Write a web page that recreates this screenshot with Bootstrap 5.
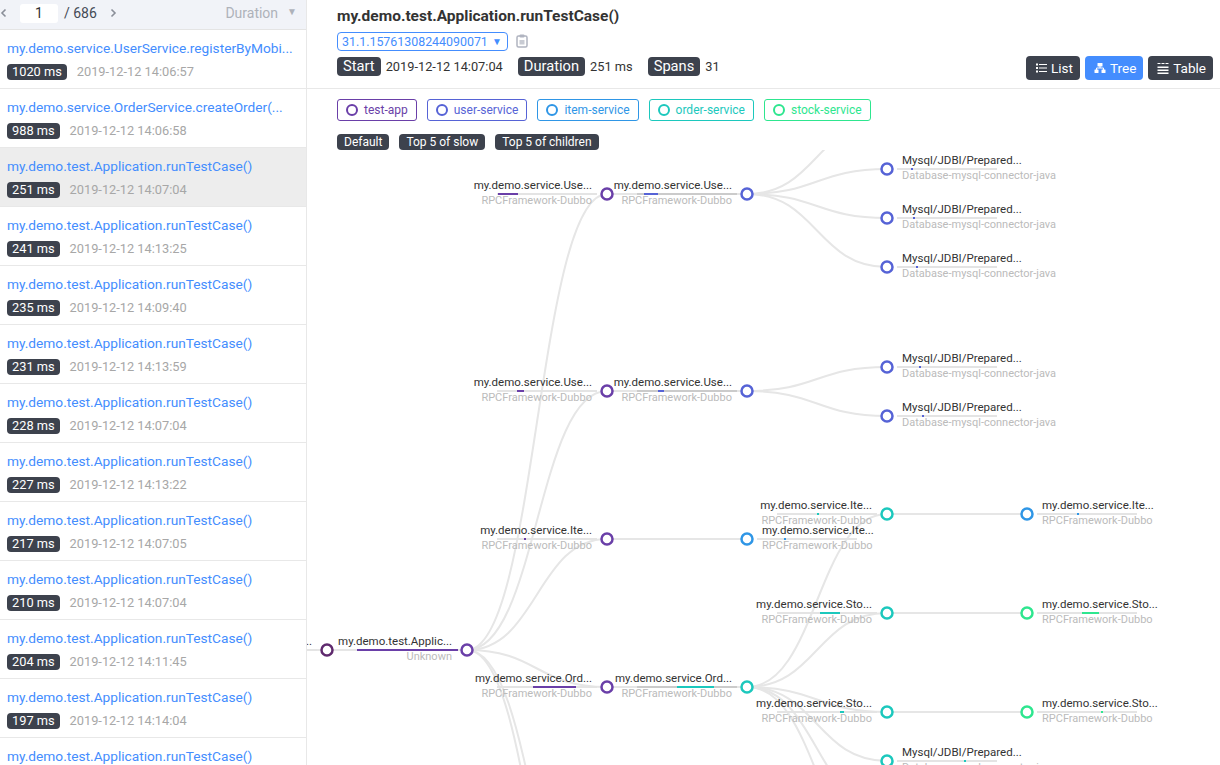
<!DOCTYPE html>
<html lang="en">
<head>
    <meta charset="UTF-8">
    <meta name="viewport" content="width=device-width, initial-scale=1.0">
    <title>Trace</title>
    <link href="https://cdn.jsdelivr.net/npm/bootstrap@5.3.0/dist/css/bootstrap.min.css" rel="stylesheet">
    <style>
        body {
            font-family: Roboto, "Noto Sans", sans-serif;
            font-size: 13px;
            color: #333;
            overflow: hidden;
            height: 100vh;
        }
        .side-panel { width: 307px; border-right: 1px solid #e8e8e8; overflow: hidden; }
        .side-top { height: 30px; background: #f1f3f8; border-bottom: 1px solid #e4e4e4; padding: 0 9px 3px 0; color: #444a55; font-size: 14px; }
        .pager-arrow { width: 8px; height: 10px; display: block; }
        .pager-input { width: 38px; height: 19px; background: #fff; border-radius: 3px; text-align: center; line-height: 19px; color: #333; margin: 0 6px 0 12px; }
        .pager-next { margin-left: 12px; }
        .sort-label { color: #aeb2ba; }
        .sort-caret { color: #aeb2ba; font-size: 10px; margin-left: 9px; margin-bottom: 3px; }
        .trace-item { height: 59px; padding: 8px 7px 0; border-bottom: 1px solid #e8e8e8; white-space: nowrap; overflow: hidden; }
        .trace-item.is-active { background: #ededed; }
        .trace-name { color: #448dfe; font-size: 13.7px; line-height: 20px; }
        .trace-meta { margin-top: 4px; display: flex; align-items: center; gap: 10px; color: #a7a7a7; font-size: 12.8px; }
        .dark-tag { background: #3d424d; color: #fff; border-radius: 4px; display: inline-block; }
        .trace-meta .dark-tag { font-size: 12.8px; line-height: 16px; padding: 0 5px; }
        .main-top { height: 89px; border-bottom: 1px solid #e8e8e8; padding: 6px 7px 0 30px; }
        .trace-title { font-size: 15.5px; font-weight: 700; line-height: 20px; margin: 0; color: #333; }
        .trace-select { border: 1px solid #448dfe; border-radius: 4px; color: #448dfe; height: 19px; width: 171px; font-size: 12.4px; line-height: 17px; padding-left: 4px; margin-top: 6px; }
        .select-caret { font-size: 10px; margin-left: auto; margin-right: 5px; }
        .info-line { margin-top: 6px; font-size: 12.8px; }
        .info-line .dark-tag { font-size: 14.7px; line-height: 19px; padding: 0 6px; margin-right: 5px; }
        .info-val { margin-right: 15px; }
        .view-btn { background: #3d424d; color: #fff; font-size: 13.5px; line-height: 24px; height: 24px; padding: 0 7px 0 9px; border-radius: 4px; border: 0; gap: 4px; }
        .view-btn.is-on { background: #448dfe; }
        .view-group { margin-top: 50px; gap: 5px; }
        .legend-zone { padding: 10px 0 0 30px; height: 61px; }
        .svc-chip { height: 22px; border: 1px solid; border-radius: 3px; font-size: 12px; padding: 0 8px; gap: 6px; }
        .svc-ring { width: 12px; height: 12px; border: 2px solid; border-radius: 50%; }
        .filter-row { margin-top: 13px; }
        .filter-row .dark-tag { font-size: 12px; line-height: 16px; padding: 0 7px; }
        .graph-box { min-height: 0; overflow: hidden; }
        .graph-box svg { display: block; width: 100%; height: 100%; }
        .g-link { fill: none; stroke: #e6e6e6; stroke-width: 2; }
        .g-name { font-size: 11.5px; fill: #333; }
        .g-sub { font-size: 11px; fill: #bbb; }
        .g-node { fill: #fff; stroke-width: 2.5; }
    </style>
</head>
<body class="d-flex">
    <div class="side-panel flex-shrink-0">
        <div class="side-top d-flex align-items-center">
            <svg class="pager-arrow" viewBox="0 0 8 10"><path d="M5.500 1.500 2 5l3.500 3.500" fill="none" stroke="#8a8f99" stroke-width="1.600"/></svg>
            <span class="pager-input">1</span>
            <span>/ 686</span>
            <svg class="pager-arrow pager-next" viewBox="0 0 8 10"><path d="M2.500 1.500 6 5 2.500 8.500" fill="none" stroke="#8a8f99" stroke-width="1.600"/></svg>
            <span class="sort-label ms-auto">Duration</span>
            <span class="sort-caret">▼</span>
        </div>
        <div id="traceList"></div>
    </div>

    <div class="flex-grow-1 d-flex flex-column" style="min-width:0">
        <div class="main-top d-flex">
            <div class="flex-grow-1">
                <h1 class="trace-title">my.demo.test.Application.runTestCase()</h1>
                <div class="d-flex align-items-center">
                    <div class="trace-select d-flex align-items-center">31.1.15761308244090071<span class="select-caret">▼</span></div>
                    <svg class="ms-2 mt-1" width="12" height="14" viewBox="0 0 12 14"><rect x="1" y="2" width="10" height="11" rx="1.500" fill="none" stroke="#b0b4c0" stroke-width="1.500"/><rect x="3.500" y="0.500" width="5" height="3" rx="1" fill="#b0b4c0"/><rect x="3.500" y="6" width="5" height="4.500" fill="#c8cbd3"/></svg>
                </div>
                <div class="info-line d-flex align-items-center">
                    <span class="dark-tag">Start</span><span class="info-val">2019-12-12 14:07:04</span>
                    <span class="dark-tag">Duration</span><span class="info-val">251 ms</span>
                    <span class="dark-tag">Spans</span><span>31</span>
                </div>
            </div>
            <div class="view-group d-flex align-self-start">
                <button class="view-btn d-flex align-items-center" type="button">
                    <svg width="12" height="12" viewBox="0 0 12 12" fill="#fff"><rect x="1" y="1.500" width="2" height="2"/><rect x="4" y="2" width="8" height="1"/><rect x="1" y="5" width="2" height="2"/><rect x="4" y="5.500" width="8" height="1"/><rect x="1" y="8.500" width="2" height="2"/><rect x="4" y="9" width="8" height="1"/></svg>List
                </button>
                <button class="view-btn is-on d-flex align-items-center" type="button">
                    <svg width="12" height="12" viewBox="0 0 12 12" fill="#fff"><rect x="3.500" y="1" width="5" height="3.500" rx=".5"/><path d="M2.500 8V6h7v2M6 4v2" fill="none" stroke="#fff"/><rect x="0.500" y="7.500" width="4" height="3.500" rx=".5"/><rect x="7.500" y="7.500" width="4" height="3.500" rx=".5"/></svg>Tree
                </button>
                <button class="view-btn d-flex align-items-center" type="button">
                    <svg width="12" height="12" viewBox="0 0 12 12" fill="#fff"><rect x="0.500" y="1" width="3" height="1"/><rect x="4.500" y="1" width="3" height="1"/><rect x="8.500" y="1" width="3" height="1"/><rect x="0.500" y="4.500" width="11" height="1.500"/><rect x="0.500" y="7.500" width="11" height="1.500"/><rect x="0.500" y="10.500" width="11" height="1.500"/></svg>Table
                </button>
            </div>
        </div>

        <div class="legend-zone">
            <div class="d-flex" style="gap:10px" id="legendRow"></div>
            <div class="filter-row d-flex" style="gap:10px">
                <span class="dark-tag">Default</span>
                <span class="dark-tag">Top 5 of slow</span>
                <span class="dark-tag">Top 5 of children</span>
            </div>
        </div>

        <div class="graph-box flex-grow-1">
            <svg id="graph"></svg>
        </div>
    </div>

    <script src="https://cdn.jsdelivr.net/npm/bootstrap@5.3.0/dist/js/bootstrap.bundle.min.js"></script>
    <script>
        const C = { app: "#6a3fa8", user: "#5663d6", item: "#2f96e6", order: "#1cc8bd", stock: "#2ee68f" };

        const legend = [["test-app", C.app], ["user-service", C.user], ["item-service", C.item], ["order-service", C.order], ["stock-service", C.stock]];
        document.getElementById("legendRow").innerHTML = legend.map(([n, c]) =>
            `<div class="svc-chip d-flex align-items-center" style="color:${c};border-color:${c}"><span class="svc-ring"></span>${n}</div>`).join("");

        const traces = [
            ["my.demo.service.UserService.registerByMobi...", "1020 ms", "14:06:57"],
            ["my.demo.service.OrderService.createOrder(...", "988 ms", "14:06:58"],
            ["my.demo.test.Application.runTestCase()", "251 ms", "14:07:04"],
            ["my.demo.test.Application.runTestCase()", "241 ms", "14:13:25"],
            ["my.demo.test.Application.runTestCase()", "235 ms", "14:09:40"],
            ["my.demo.test.Application.runTestCase()", "231 ms", "14:13:59"],
            ["my.demo.test.Application.runTestCase()", "228 ms", "14:07:04"],
            ["my.demo.test.Application.runTestCase()", "227 ms", "14:13:22"],
            ["my.demo.test.Application.runTestCase()", "217 ms", "14:07:05"],
            ["my.demo.test.Application.runTestCase()", "210 ms", "14:07:04"],
            ["my.demo.test.Application.runTestCase()", "204 ms", "14:11:45"],
            ["my.demo.test.Application.runTestCase()", "197 ms", "14:14:04"],
            ["my.demo.test.Application.runTestCase()", "196 ms", "14:07:05"]
        ];
        document.getElementById("traceList").innerHTML = traces.map((t, i) =>
            `<div class="trace-item${i === 2 ? " is-active" : ""}"><div class="trace-name">${t[0]}</div><div class="trace-meta"><span class="dark-tag">${t[1]}</span>2019-12-12 ${t[2]}</div></div>`).join("");

        // x, y, parent, colour, name, sub, bar start, bar end, right label, darker base
        const RPC = "RPCFramework-Dubbo", DB = "Database-mysql-connector-java", SQL = "Mysql/JDBI/Prepared...";
        const nodes = {
            a: [327, 650, null, "#5f2a6e", "...", "", 0, 0],
            b: [467, 650, "a", C.app, "my.demo.test.Applic...", "Unknown", 357, 458],
            c: [607, 194, "b", C.app, "my.demo.service.Use...", RPC, 498, 518],
            d: [747, 194, "c", C.user, "my.demo.service.Use...", RPC, 644, 658, 0, 1],
            d0: [887, 120, "d", C.user, "", "", 0, 0],
            e1: [887, 169, "d", C.user, SQL, DB, 911, 913, 1],
            e2: [887, 218, "d", C.user, SQL, DB, 913, 915, 1],
            e3: [887, 267, "d", C.user, SQL, DB, 916, 918, 1],
            f: [607, 391, "b", C.app, "my.demo.service.Use...", RPC, 517, 524],
            g: [747, 391, "f", C.user, "my.demo.service.Use...", RPC, 658, 664, 0, 1],
            g1: [887, 367, "g", C.user, SQL, DB, 919, 921, 1],
            g2: [887, 416, "g", C.user, SQL, DB, 922, 924, 1],
            h: [607, 539, "b", C.app, "my.demo.service.Ite...", RPC, 524, 526],
            i: [747, 539, "h", C.item, "my.demo.service.Ite...", RPC, 784, 786, 1],
            j: [607, 687, "b", C.app, "my.demo.service.Ord...", RPC, 533, 576],
            k: [747, 687, "j", C.order, "my.demo.service.Ord...", RPC, 677, 714, 0, 1],
            l: [887, 514, "k", C.order, "my.demo.service.Ite...", RPC, 817, 819],
            l1: [1027, 514, "l", C.item, "my.demo.service.Ite...", RPC, 1077, 1079, 1],
            m: [887, 613, "k", C.order, "my.demo.service.Sto...", RPC, 820, 840],
            m1: [1027, 613, "m", C.stock, "my.demo.service.Sto...", RPC, 1082, 1099, 1],
            n: [887, 712, "k", C.order, "my.demo.service.Sto...", RPC, 840, 844],
            n1: [1027, 712, "n", C.stock, "my.demo.service.Sto...", RPC, 1101, 1103, 1],
            o: [887, 761, "k", C.order, SQL, DB, 964, 966, 1],
            o1: [887, 810, "k", C.order, SQL, DB, 960, 962, 1],
            o2: [887, 859, "k", C.order, SQL, DB, 960, 962, 1],
            p1: [607, 991, "b", C.app, "", "", 0, 0],
            p2: [607, 1068, "b", C.app, "", "", 0, 0]
        };

        let links = '<path class="g-link" d="M297 650H327"/>', labels = "", rings = "";
        Object.values(nodes).forEach(([x, y, par, col, name, sub, s, e, right, dark]) => {
            if (par) {
                const [px, py] = nodes[par];
                const mx = (px + x) / 2;
                links += `<path class="g-link" d="M${px} ${py}C${mx} ${py} ${mx} ${y} ${x} ${y}"/>`;
            }
            const bx = right ? x + 10 : x - 110;
            const tx = right ? x + 15 : x - 15;
            const anchor = right ? "start" : "end";
            if (name) {
                labels += `<rect x="${bx}" y="${y - 1}" width="100" height="2" fill="${dark ? "#cbcbcb" : "#e4e4e4"}"/>`;
                if (e) labels += `<rect x="${s}" y="${y - 1}" width="${e - s}" height="2" fill="${col}"/>`;
                labels += `<text class="g-name" x="${tx}" y="${y - 5}" text-anchor="${anchor}">${name}</text>`;
                if (sub) labels += `<text class="g-sub" x="${tx}" y="${y + 10}" text-anchor="${anchor}">${sub}</text>`;
            }
            rings += `<circle class="g-node" cx="${x}" cy="${y}" r="5.5" stroke="${col}"/>`;
        });
        document.getElementById("graph").innerHTML = `<g transform="translate(-307 -150)">${links}${labels}${rings}</g>`;
    </script>
</body>
</html>
